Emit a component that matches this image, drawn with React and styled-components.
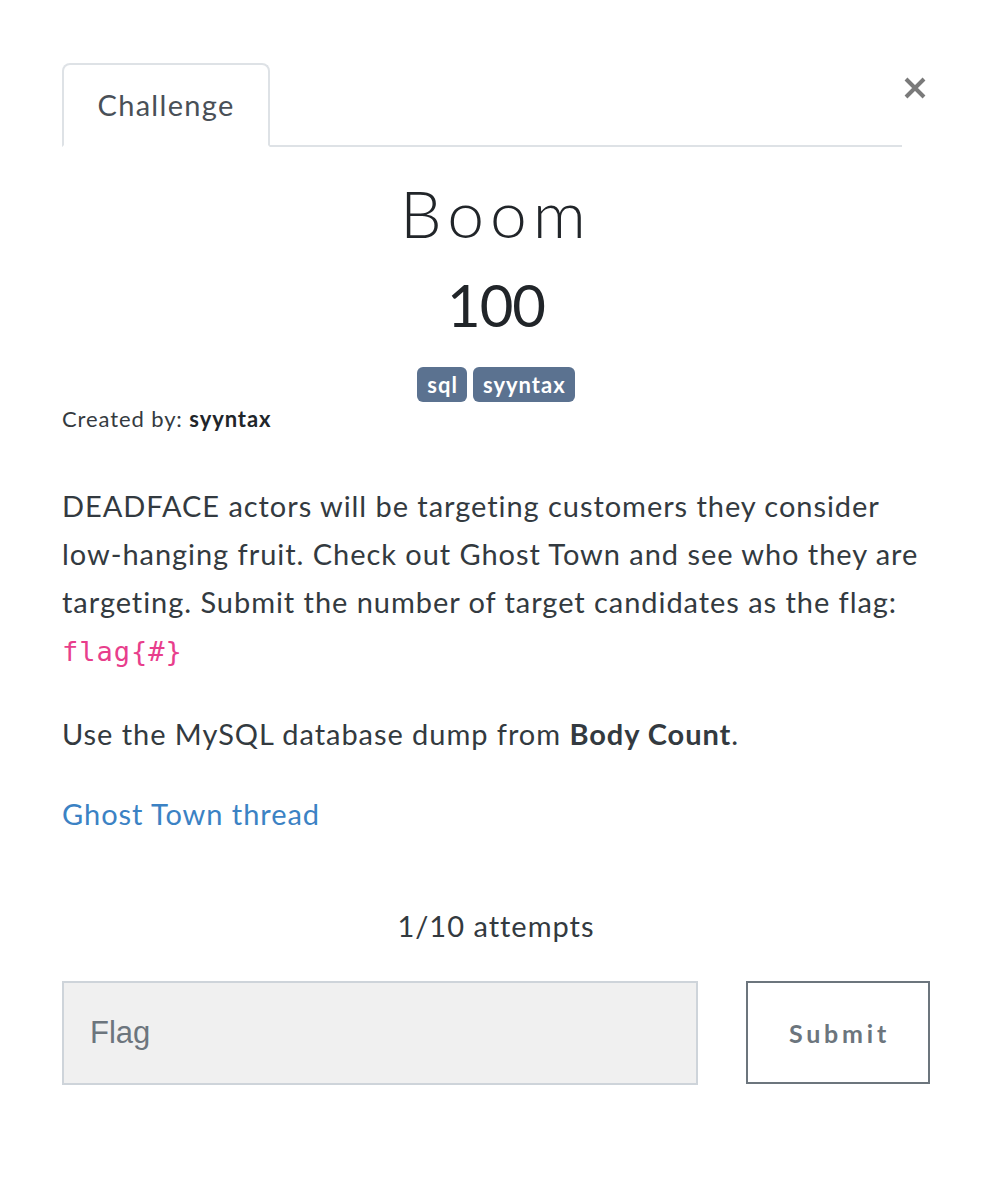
import React from "react";
import styled, { createGlobalStyle } from "styled-components";

const Global = createGlobalStyle`
  html, body { margin: 0; padding: 0; background: #fff; }
  body { font-family: Lato, "Noto Sans", sans-serif; color: #212529; }
  * { box-sizing: border-box; }
`;

const Modal = styled.div`
  width: 992px;
  min-height: 1178px;
  padding: 63px 62px 0 62px;
  position: relative;
`;

const Close = styled.button`
  position: absolute;
  top: 70px;
  right: 62px;
  border: none;
  background: none;
  padding: 0;
  width: 30px;
  height: 36px;
  display: flex;
  align-items: center;
  justify-content: center;
  cursor: pointer;
`;

const TabBar = styled.div`
  display: flex;
  align-items: flex-end;
  margin-right: 28px;
  border-bottom: 2px solid #dee2e6;
`;

const Tab = styled.div`
  width: 208px;
  height: 84px;
  margin-bottom: -2px;
  border: 2px solid #dee2e6;
  border-bottom-color: #fff;
  border-radius: 8px 8px 0 0;
  display: flex;
  align-items: center;
  justify-content: center;
  font-size: 29px;
  letter-spacing: 1.3px;
  color: #495057;
  padding-bottom: 2px;
`;

const Title = styled.h2`
  margin: 26px 0 0;
  text-align: center;
  font-family: Lato, sans-serif;
  font-weight: 300;
  font-size: 66px;
  letter-spacing: 6px;
  line-height: 80px;
  color: #212529;
`;

const Value = styled.h3`
  margin: 10px 0 0;
  text-align: center;
  font-weight: 400;
  font-size: 58px;
  letter-spacing: -1px;
  line-height: 84px;
  color: #212529;
`;

const Tags = styled.div`
  display: flex;
  justify-content: center;
  gap: 6px;
  margin-top: 20px;
`;

const Tag = styled.span`
  background: #5b7290;
  color: #fff;
  font-weight: 700;
  font-size: 22px;
  letter-spacing: 1px;
  line-height: 35px;
  height: 35px;
  padding: 0 9px 0 10px;
  border-radius: 6px;
`;

const Creator = styled.div`
  font-size: 22px;
  letter-spacing: 0.9px;
  color: #343a40;
  margin-top: 2px;
  line-height: 30px;
  b { color: #212529; }
`;

const Description = styled.div`
  margin-top: 48px;
  font-size: 29px;
  letter-spacing: 0.95px;
  line-height: 48px;
  color: #333a40;
  p { margin: 0 0 34px; }
  p + p { margin-bottom: 32px; }
`;

const Code = styled.code`
  font-family: "DejaVu Sans Mono", "Liberation Mono", monospace;
  font-size: 27px;
  letter-spacing: 1px;
  color: #e83e8c;
`;

const Link = styled.a`
  color: #3b82c4;
  text-decoration: none;
`;

const Attempts = styled.div`
  margin-top: 64px;
  text-align: center;
  font-size: 29px;
  letter-spacing: 1px;
  color: #333a40;
  line-height: 48px;
`;

const Form = styled.div`
  margin-top: 31px;
  display: flex;
  justify-content: space-between;
  align-items: stretch;
`;

const Input = styled.input`
  width: 636px;
  height: 104px;
  background: #f0f0f0;
  border: 2px solid #ced4da;
  padding: 0 26px;
  font-family: "Liberation Sans", Arial, sans-serif;
  font-size: 31px;
  color: #495057;
  outline: none;
  &::placeholder { color: #6c757d; opacity: 1; }
`;

const Submit = styled.button`
  width: 184px;
  height: 103px;
  background: #fff;
  border: 2px solid #6c757d;
  border-radius: 0;
  font-family: Lato, sans-serif;
  font-weight: 700;
  font-size: 25px;
  letter-spacing: 3.8px;
  color: #6c757d;
  padding: 0 0 0 3px;
`;

export default function App() {
  return (
    <>
      <Global />
      <Modal>
        <Close aria-label="Close">
          <svg width="24" height="24" viewBox="0 0 24 24">
            <path d="M3 3 L21 21 M21 3 L3 21" stroke="#7a7a7a" strokeWidth="4" strokeLinecap="butt" />
          </svg>
        </Close>
        <TabBar>
          <Tab>Challenge</Tab>
        </TabBar>
        <Title>Boom</Title>
        <Value>100</Value>
        <Tags>
          <Tag>sql</Tag>
          <Tag>syyntax</Tag>
        </Tags>
        <Creator>
          Created by: <b>syyntax</b>
        </Creator>
        <Description>
          <p>
            DEADFACE actors will be targeting customers they consider low-hanging fruit. Check out Ghost Town and see who they are targeting. Submit the number of target candidates as the flag: <Code>flag{"{#}"}</Code>
          </p>
          <p>
            Use the MySQL database dump from <b>Body Count</b>.
          </p>
          <p>
            <Link href="#">Ghost Town thread</Link>
          </p>
        </Description>
        <Attempts>1/10 attempts</Attempts>
        <Form>
          <Input placeholder="Flag" />
          <Submit>Submit</Submit>
        </Form>
      </Modal>
    </>
  );
}
